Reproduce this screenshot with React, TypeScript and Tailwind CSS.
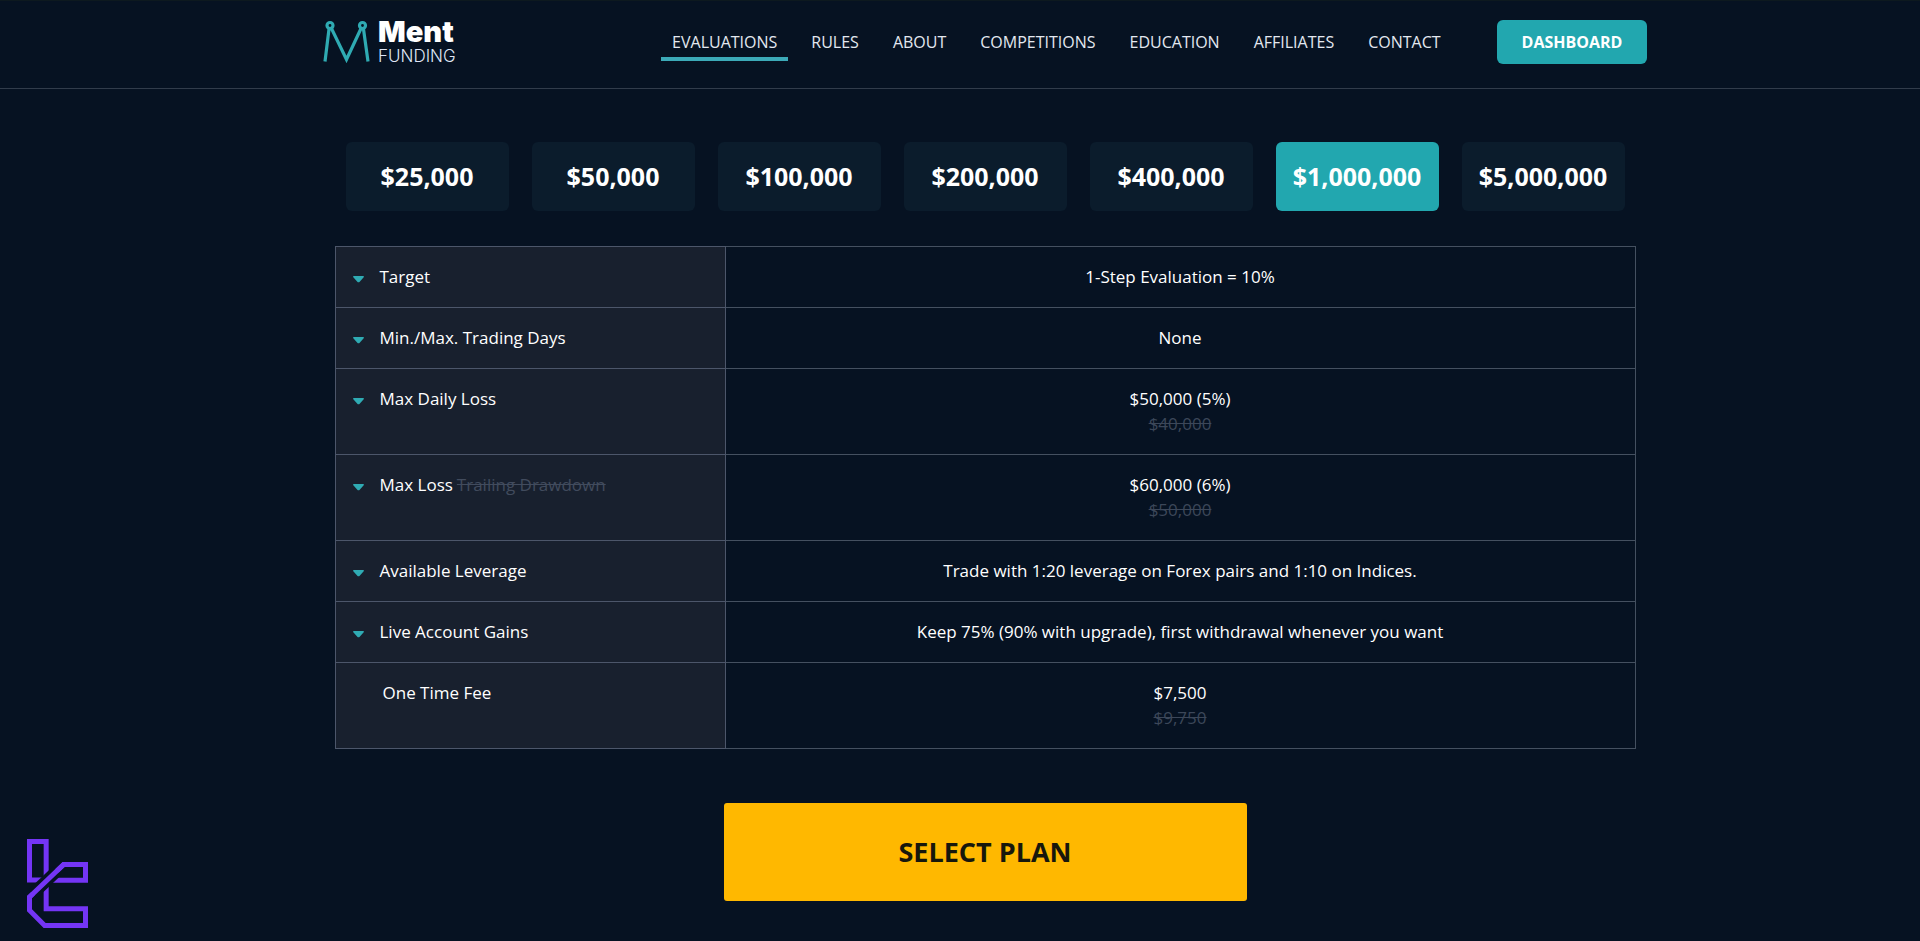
import { useState } from 'react';

interface NavItem {
  label: string;
  href: string;
}

interface PlanRow {
  label: string;
  oldLabel?: string;
  value: string;
  oldValue?: string;
  expandable: boolean;
}

const NAV_ITEMS: NavItem[] = [
  { label: 'EVALUATIONS', href: '#evaluations' },
  { label: 'RULES', href: '#rules' },
  { label: 'ABOUT', href: '#about' },
  { label: 'COMPETITIONS', href: '#competitions' },
  { label: 'EDUCATION', href: '#education' },
  { label: 'AFFILIATES', href: '#affiliates' },
  { label: 'CONTACT', href: '#contact' },
];

const PLANS = ['$25,000', '$50,000', '$100,000', '$200,000', '$400,000', '$1,000,000', '$5,000,000'];

const ROWS: PlanRow[] = [
  { label: 'Target', value: '1-Step Evaluation = 10%', expandable: true },
  { label: 'Min./Max. Trading Days', value: 'None', expandable: true },
  { label: 'Max Daily Loss', value: '$50,000 (5%)', oldValue: '$40,000', expandable: true },
  { label: 'Max Loss', oldLabel: 'Trailing Drawdown', value: '$60,000 (6%)', oldValue: '$50,000', expandable: true },
  { label: 'Available Leverage', value: 'Trade with 1:20 leverage on Forex pairs and 1:10 on Indices.', expandable: true },
  { label: 'Live Account Gains', value: 'Keep 75% (90% with upgrade), first withdrawal whenever you want', expandable: true },
  { label: 'One Time Fee', value: '$7,500', oldValue: '$9,750', expandable: false },
];

export default function App() {
  const [plan, setPlan] = useState('$1,000,000');

  return (
    <div className="min-h-screen bg-[#061222] text-white font-['Open_Sans',sans-serif]">
      <Header />

      <main className="pl-[50px]">
        <div className="max-w-[1301px] mx-auto pt-[53px]">
          <div className="grid grid-cols-7 gap-[23px] px-[11px]">
            {PLANS.map(p => (
              <button
                key={p}
                type="button"
                onClick={() => setPlan(p)}
                className={`h-[69px] rounded-md text-[25px] font-bold cursor-pointer ${
                  p === plan ? 'bg-[#22a7af]' : 'bg-[#0b1c2c]'
                }`}
              >
                {p}
              </button>
            ))}
          </div>

          <table className="w-full mt-[35px] table-fixed border-collapse text-[17px] leading-[25px] font-medium">
            <tbody>
              {ROWS.map(row => (
                <Row key={row.label} row={row} />
              ))}
            </tbody>
          </table>

          <div className="flex justify-center mt-[54px] pb-7">
            <button
              type="button"
              className="w-[523px] h-[98px] rounded-[3px] bg-[#ffb800] text-[#17170c] text-[27px] font-bold cursor-pointer"
            >
              SELECT PLAN
            </button>
          </div>
        </div>
      </main>

      <Watermark />
    </div>
  );
}

function Header() {
  return (
    <header className="h-[89px] pl-[50px] border-t border-t-[#0d191f] border-b border-b-[#313c4b]">
      <div className="max-w-[1324px] mx-auto pt-[19px] flex items-start justify-between">
        <a href="#home" className="flex items-start gap-[7px]">
          <LogoMark />
          <span className="flex flex-col font-['Inter',sans-serif]">
            <span className="text-[29px] leading-6 font-black">Ment</span>
            <span className="text-[17px] leading-[25px] font-light text-[#dfe6f5]">FUNDING</span>
          </span>
        </a>

        <nav className="flex ml-[160px]">
          {NAV_ITEMS.map((item, i) => (
            <a
              key={item.label}
              href={item.href}
              className={`mx-[6px] px-[11px] pt-[10px] pb-[3px] text-base leading-6 text-[#e3e8f0] border-b-4 ${
                i === 0 ? 'border-[#3caab8]' : 'border-transparent'
              }`}
            >
              {item.label}
            </a>
          ))}
        </nav>

        <a
          href="#dashboard"
          className="w-[150px] h-11 rounded-md bg-[#22a7af] flex items-center justify-center text-base font-bold"
        >
          DASHBOARD
        </a>
      </div>
    </header>
  );
}

function Row({ row }: { row: PlanRow }) {
  return (
    <tr>
      <th
        scope="row"
        className="w-[30%] pt-[17px] pb-[18px] px-[17px] border border-[#4c566a] bg-[#18202e] text-left align-top font-medium"
      >
        <span className="flex items-center gap-4">
          {row.expandable ? <Caret /> : <span className="w-[14px]" />}
          <span>
            {row.label}
            {row.oldLabel && <s className="ml-1 font-normal text-[#414b5d]">{row.oldLabel}</s>}
          </span>
        </span>
      </th>
      <td className="pt-[17px] pb-[18px] border border-[#445060] text-center align-top">
        {row.value}
        {row.oldValue && <s className="block font-normal text-[#3c4759]">{row.oldValue}</s>}
      </td>
    </tr>
  );
}

function Caret() {
  return (
    <svg width="11" height="7" viewBox="0 0 11 7" className="mt-1.5" fill="#2fabb3" aria-hidden="true">
      <path d="M.8 0h9.4c.7 0 1 .8.5 1.3L6.7 5.8c-.6.7-1.8.7-2.4 0L.3 1.3C-.2.8.1 0 .8 0z" />
    </svg>
  );
}

function LogoMark() {
  return (
    <svg width="48" height="44" viewBox="0 1 48 44" fill="none" stroke="#2fabb3" strokeWidth="3.2" aria-hidden="true">
      <circle cx="7" cy="6.5" r="3" />
      <circle cx="39.5" cy="6.5" r="3" />
      <path d="M6 10L2 42.5M8.5 9.5L23.5 40.5L38 9.5M40.5 10L45 42.5" />
    </svg>
  );
}

function Watermark() {
  return (
    <svg
      width="61"
      height="89"
      viewBox="0 0 183 267"
      fill="none"
      stroke="#7435f5"
      strokeWidth="15"
      className="fixed left-[27px] bottom-[13px]"
      aria-hidden="true"
    >
      <path d="M62 123H7.5V7.5H57.5V123" />
      <path d="M57.5 123V209.5H175.5V259.5H53L7.5 214V174L110 76.5H175.5V123.5H62" />
      {/* gap around the diagonal stroke */}
      <path d="M18 164L90 95.5" stroke="#061222" strokeWidth="36" />
      <path d="M7.5 180V174L110 76.5H122" />
    </svg>
  );
}
